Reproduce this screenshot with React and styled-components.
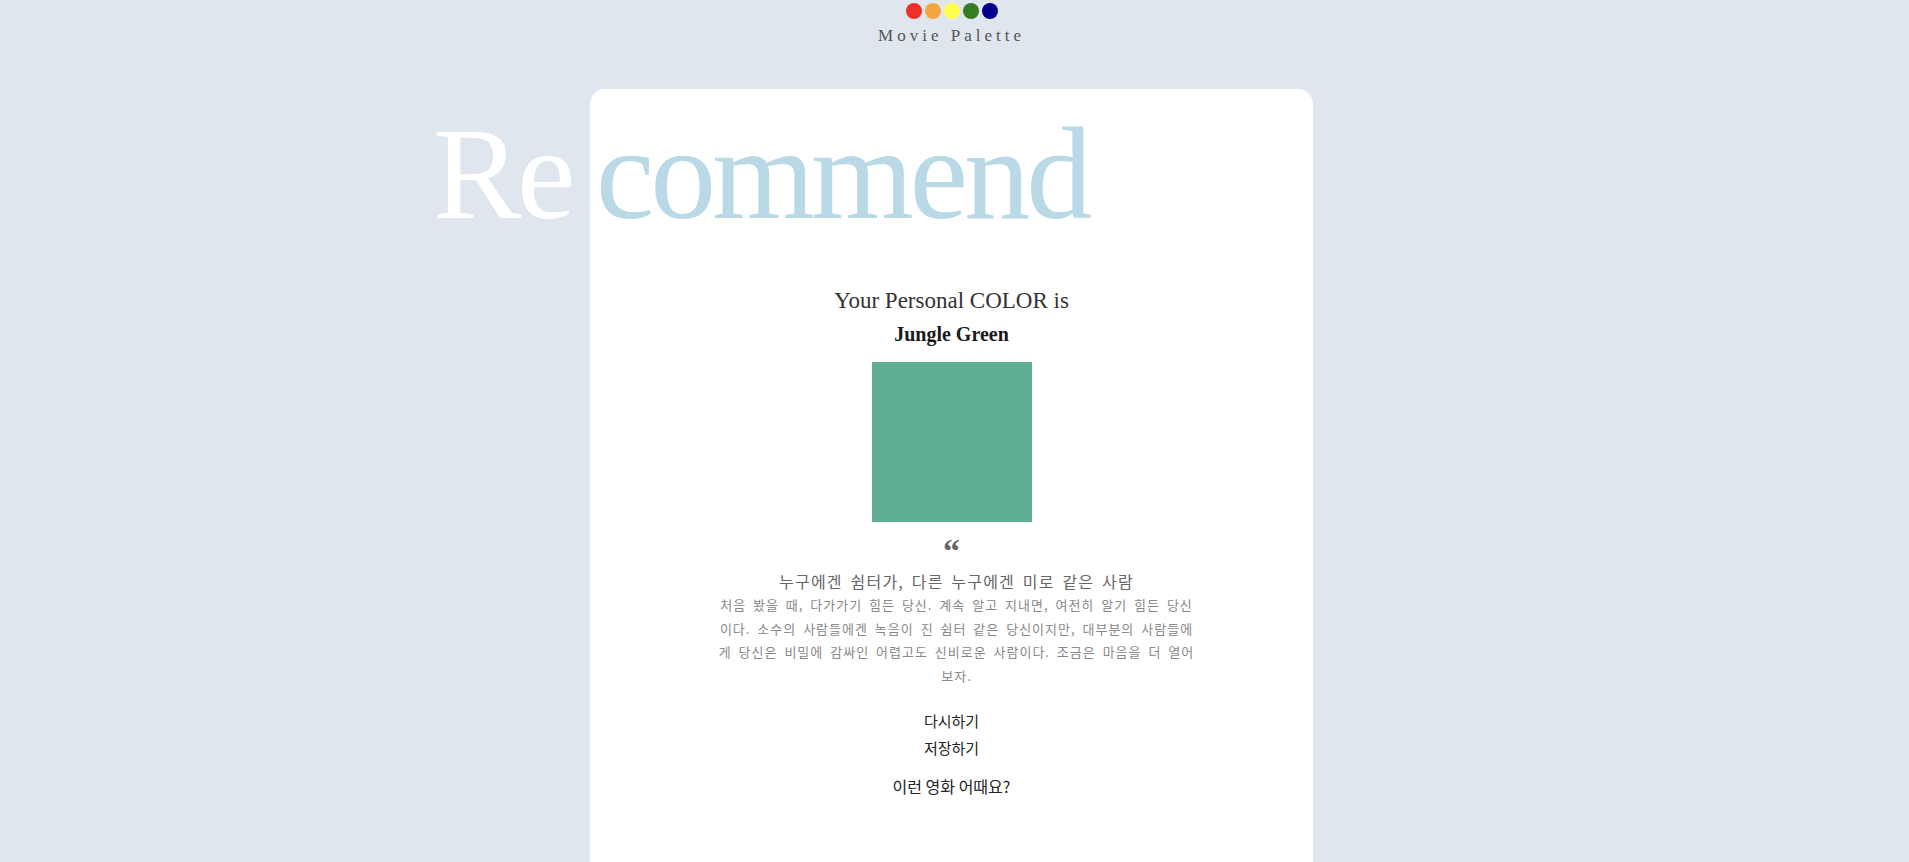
import React from 'react'
import { styled, createGlobalStyle } from 'styled-components'

const GlobalStyle = createGlobalStyle`
  html, body {
    margin: 0;
    padding: 0;
    background-color: #dfe6ee;
  }
  body {
    font-family: "Liberation Serif", "Noto Sans CJK KR", serif;
  }
  ::-webkit-scrollbar {
    width: 6px;
    height: 4px;
  }
  ::-webkit-scrollbar-track {
    background-color: #f0f0f0;
  }
  ::-webkit-scrollbar-thumb {
    background-color: #c1c1c1;
  }
`;

const Page = styled.div`
  display: flex;
  flex-direction: column;
  align-items: center;
  padding: 0 6px 40px 0;
`;

const Header = styled.header`
  display: flex;
  flex-direction: column;
  align-items: center;
  padding-top: 3px;
`;

const Dots = styled.div`
  display: flex;
  gap: 3px;
`;

const Dot = styled.span`
  width: 16px;
  height: 16px;
  border-radius: 50%;
  background-color: ${({ color }) => color};
`;

const Logo = styled.h1`
  margin: 7px 0 0;
  font-family: "Liberation Serif", serif;
  font-size: 17px;
  font-weight: 400;
  line-height: 20px;
  letter-spacing: 4px;
  color: #555;
`;

const Card = styled.main`
  display: flex;
  flex-direction: column;
  align-items: center;
  width: 723px;
  min-height: 900px;
  margin-top: 43px;
  background-color: #fff;
  border-radius: 15px;
`;

const Headline = styled.h2`
  align-self: flex-start;
  margin: 19px 0 0 -157px;
  font-family: "Liberation Serif", serif;
  font-size: 132px;
  font-weight: 400;
  line-height: 1;
  letter-spacing: -4px;
  word-spacing: -5px;
  white-space: nowrap;
`;

const HeadPart = styled.span`
  color: ${({ tone }) => tone};
`;

const Lead = styled.p`
  margin: 47px 0 0;
  font-family: "Liberation Serif", serif;
  font-size: 23px;
  line-height: 28px;
  color: #333;
`;

const ColorName = styled.h3`
  margin: 6px 0 0;
  font-family: "Liberation Serif", serif;
  font-size: 20px;
  font-weight: 700;
  line-height: 26px;
  color: #1a1a1a;
`;

const Swatch = styled.div`
  width: 160px;
  height: 160px;
  margin-top: 15px;
  background-color: ${({ color }) => color};
`;

const Quote = styled.div`
  margin-top: 13px;
  font-family: "Liberation Serif", serif;
  font-size: 34px;
  font-weight: 700;
  line-height: 32px;
  color: #666;
`;

const Message = styled.section`
  display: flex;
  flex-direction: column;
  align-items: center;
  padding-left: 10px;
`;

const Motto = styled.h4`
  margin: 3px 0 0;
  font-family: "Noto Sans CJK KR", sans-serif;
  font-size: 16px;
  font-weight: 400;
  line-height: 22px;
  letter-spacing: 1.2px;
  word-spacing: 3px;
  color: #666;
`;

const Description = styled.p`
  width: 480px;
  margin: 1px 0 0;
  font-family: "Noto Sans CJK KR", sans-serif;
  font-size: 13px;
  line-height: 23.5px;
  letter-spacing: 1px;
  word-spacing: 3px;
  word-break: break-all;
  text-align: center;
  color: #888;
`;

const Actions = styled.div`
  display: flex;
  flex-direction: column;
  align-items: center;
  margin-top: 20px;
`;

const TextButton = styled.button`
  padding: 0;
  border: none;
  background: none;
  font-family: "Noto Sans CJK KR", sans-serif;
  font-size: 15px;
  line-height: 27px;
  color: #222;
  cursor: pointer;
`;

const Suggest = styled.h4`
  margin: 13px 0 0;
  font-family: "Noto Sans CJK KR", sans-serif;
  font-size: 16px;
  font-weight: 400;
  line-height: 24px;
  color: #222;
`;

const palette = ['#ee3124', '#f4a63d', '#ffff4d', '#357d20', '#00008b'];

const result = {
  name: 'Jungle Green',
  hex: '#5dae92',
  motto: '누구에겐 쉼터가, 다른 누구에겐 미로 같은 사람',
  text: '처음 봤을 때, 다가가기 힘든 당신. 계속 알고 지내면, 여전히 알기 힘든 당신이다. 소수의 사람들에겐 녹음이 진 쉼터 같은 당신이지만, 대부분의 사람들에게 당신은 비밀에 감싸인 어렵고도 신비로운 사람이다. 조금은 마음을 더 열어보자.',
};

const App = () => {
  return (
    <>
      <GlobalStyle />
      <Page>
        <Header>
          <Dots>
            {palette.map((c) => (
              <Dot key={c} color={c} />
            ))}
          </Dots>
          <Logo>Movie Palette</Logo>
        </Header>
        <Card>
          <Headline>
            <HeadPart tone="#fff">Re</HeadPart>{' '}
            <HeadPart tone="#b8d9e5">commend</HeadPart>
          </Headline>
          <Lead>Your Personal COLOR is</Lead>
          <ColorName>{result.name}</ColorName>
          <Swatch color={result.hex} />
          <Quote>“</Quote>
          <Message>
            <Motto>{result.motto}</Motto>
            <Description>{result.text}</Description>
          </Message>
          <Actions>
            <TextButton>다시하기</TextButton>
            <TextButton>저장하기</TextButton>
          </Actions>
          <Suggest>이런 영화 어때요?</Suggest>
        </Card>
      </Page>
    </>
  )
}

export default App
